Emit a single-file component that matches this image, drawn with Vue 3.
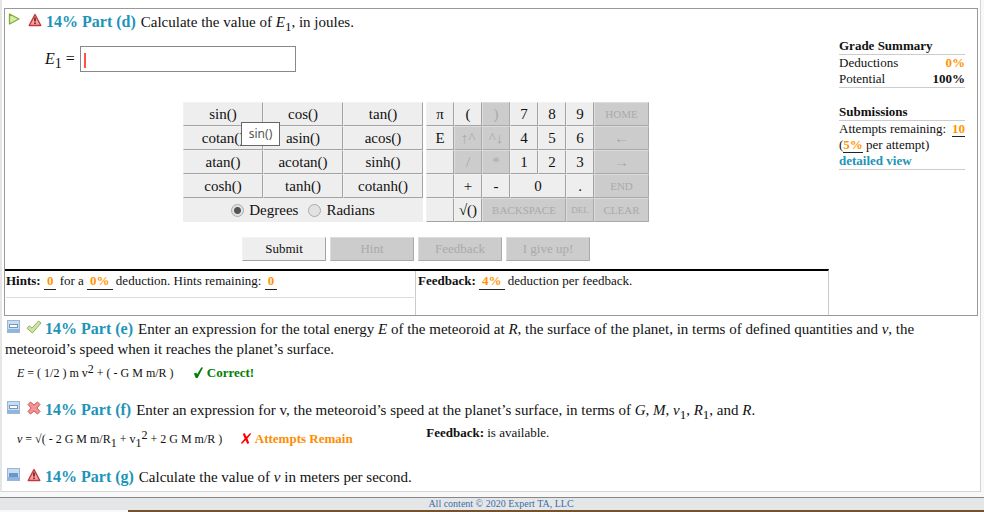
<template>
  <div class="page">
    <main class="assignment">
      <!-- Active part -->
      <section class="active-part">
        <div class="work">
          <h2 class="part-title">
            <svg class="icon icon-arrow" viewBox="0 0 12 12">
              <path d="M1.5 1 L11 6 L1.5 11 Z" fill="#d4efa0" stroke="#84aa3c" stroke-width="1.3" stroke-linejoin="round" />
            </svg>
            <svg class="icon" viewBox="0 0 14 14">
              <path d="M7 1.5 L12.8 12.5 H1.2 Z" fill="#f6a0a0" stroke="#bd3b3f" stroke-width="1.4" stroke-linejoin="round" />
              <path d="M7 4.5 V8.5 M7 9.6 V11" stroke="#7c1218" stroke-width="1.6" />
            </svg>
            <a href="#" class="part-link">14% Part (d)</a>
            <span>Calculate the value of <i>E</i><sub>1</sub>, in joules.</span>
          </h2>

          <div class="answer-row">
            <label for="answer"><i>E</i><sub>1</sub> =</label>
            <div class="answer-box">
              <input id="answer" v-model="answer" type="text" autocomplete="off" />
              <span class="caret"></span>
            </div>
          </div>

          <div class="calculator">
            <div class="functions">
              <button v-for="fn in functions" :key="fn" type="button" class="key" @click="insert(fn)">{{ fn }}</button>
              <div class="angle-mode">
                <label><input v-model="angle" type="radio" name="angle" value="deg" />Degrees</label>
                <label><input v-model="angle" type="radio" name="angle" value="rad" />Radians</label>
              </div>
              <div class="tooltip" role="tooltip">sin()</div>
            </div>
            <div class="keypad">
              <button
                v-for="(key, index) in keys"
                :key="index"
                type="button"
                class="key"
                :class="key.type"
                :disabled="key.off"
                @click="insert(key.label)"
              >{{ key.label }}</button>
            </div>
          </div>

          <div class="actions">
            <button type="button" class="key action">Submit</button>
            <button type="button" class="key action" disabled>Hint</button>
            <button type="button" class="key action" disabled>Feedback</button>
            <button type="button" class="key action" disabled>I give up!</button>
          </div>

          <div class="help">
            <div class="hints">
              <p>
                <b>Hints:</b> <span class="blank">0</span> for a <span class="blank">0%</span>
                deduction. Hints remaining: <span class="blank">0</span>
              </p>
            </div>
            <div class="feedback">
              <p><b>Feedback:</b> <span class="blank">4%</span> deduction per feedback.</p>
            </div>
          </div>
        </div>

        <aside class="summary">
          <div class="summary-block">
            <h3>Grade Summary</h3>
            <div class="summary-line"><span>Deductions</span><b class="orange">0%</b></div>
            <div class="summary-line"><span>Potential</span><b>100%</b></div>
          </div>
          <div class="summary-block">
            <h3>Submissions</h3>
            <div class="summary-line"><span>Attempts remaining:</span><b class="underlined">10</b></div>
            <div>(<b class="underlined">5%</b> per attempt)</div>
            <a href="#">detailed view</a>
          </div>
        </aside>
      </section>

      <!-- Other parts -->
      <section class="part part-e">
        <h2 class="part-title">
          <svg class="icon icon-toggle" viewBox="0 0 13 13">
            <rect x="0.5" y="0.5" width="12" height="12" fill="#c9ddf2" stroke="#9db5d0" />
            <path d="M1 9 H12 V12 H1 Z" fill="#8fb5dc" />
            <rect x="2.5" y="4.5" width="8" height="3" fill="#fff" stroke="#7397c3" />
          </svg>
          <svg class="icon icon-check" viewBox="0 0 16 14">
            <path d="M1 8.2 L3.4 5.8 L6 8.2 L12.6 1 L15 3 L6.4 13 Z" fill="#cfe6a0" stroke="#93ad60" stroke-linejoin="round" />
          </svg>
          <a href="#" class="part-link">14% Part (e)</a>
          <span>Enter an expression for the total energy <i>E</i> of the meteoroid at <i>R</i>, the surface of the planet, in terms of defined quantities and <i>v</i>, the <span>meteoroid’s speed when it reaches the planet’s surface.</span></span>
        </h2>
        <div class="result">
          <span><i>E</i> = ( 1/2 ) m v<sup>2</sup> + ( - G M m/R )</span>
          <b class="verdict correct">
            <svg viewBox="0 0 12 12"><path d="M1 7 L3.5 6 L4.5 8 L9 0.5 H11 L5 12 H3 Z" fill="#008000" /></svg>
            Correct!
          </b>
        </div>
      </section>

      <section class="part part-f">
        <h2 class="part-title">
          <svg class="icon icon-toggle" viewBox="0 0 13 13">
            <rect x="0.5" y="0.5" width="12" height="12" fill="#c9ddf2" stroke="#9db5d0" />
            <path d="M1 9 H12 V12 H1 Z" fill="#8fb5dc" />
            <rect x="2.5" y="4.5" width="8" height="3" fill="#fff" stroke="#7397c3" />
          </svg>
          <svg class="icon" viewBox="0 0 14 14">
            <path d="M3.5 1 L7 4 L10.5 1 L13 3.5 L10 7 L13 10.5 L10.5 13 L7 10 L3.5 13 L1 10.5 L4 7 L1 3.5 Z" fill="#f39494" stroke="#d05555" stroke-linejoin="round" />
          </svg>
          <a href="#" class="part-link">14% Part (f)</a>
          <span>Enter an expression for v, the meteoroid’s speed at the planet’s surface, in terms of <i>G</i>, <i>M</i>, <i>v</i><sub>1</sub>, <i>R</i><sub>1</sub>, and <i>R</i>.</span>
        </h2>
        <div class="result-row">
          <div class="result">
            <span><i>v</i> = √( - 2 G M m/R<sub>1</sub> + v<sub>1</sub><sup>2</sup> + 2 G M m/R )</span>
            <b class="verdict remain">
              <svg viewBox="0 0 12 12"><path d="M2 1 L4 0 L6 4 L10 0 L11 1 L7 6 L9 11 L7 12 L5 8 L1 12 L0 11 L4 6 Z" fill="#f00" /></svg>
              Attempts Remain
            </b>
          </div>
          <div><b>Feedback:</b> is available.</div>
        </div>
      </section>

      <section class="part part-g">
        <h2 class="part-title">
          <svg class="icon icon-toggle" viewBox="0 0 13 13">
            <rect x="0.5" y="0.5" width="12" height="12" fill="#c9ddf2" stroke="#9db5d0" />
            <path d="M1 9 H12 V12 H1 Z" fill="#8fb5dc" />
            <rect x="2" y="5" width="9" height="4" fill="#6a97c8" />
          </svg>
          <svg class="icon" viewBox="0 0 14 14">
            <path d="M7 1.5 L12.8 12.5 H1.2 Z" fill="#f6a0a0" stroke="#bd3b3f" stroke-width="1.4" stroke-linejoin="round" />
            <path d="M7 4.5 V8.5 M7 9.6 V11" stroke="#7c1218" stroke-width="1.6" />
          </svg>
          <a href="#" class="part-link">14% Part (g)</a>
          <span>Calculate the value of <i>v</i> in meters per second.</span>
        </h2>
      </section>
    </main>
    <footer>All content © 2020 Expert TA, LLC</footer>
    <div class="progress"></div>
  </div>
</template>

<script setup>
import { ref } from "vue";

const answer = ref("");
const angle = ref("deg");

const functions = [
  "sin()", "cos()", "tan()",
  "cotan()", "asin()", "acos()",
  "atan()", "acotan()", "sinh()",
  "cosh()", "tanh()", "cotanh()"
];

const keys = [
  { label: "π" }, { label: "(" }, { label: ")", off: true },
  { label: "7" }, { label: "8" }, { label: "9" },
  { label: "HOME", off: true, type: "command" },

  { label: "E" }, { label: "↑^", off: true }, { label: "^↓", off: true },
  { label: "4" }, { label: "5" }, { label: "6" },
  { label: "←", off: true },

  { label: "" }, { label: "/", off: true }, { label: "*", off: true },
  { label: "1" }, { label: "2" }, { label: "3" },
  { label: "→", off: true },

  { label: "" }, { label: "+" }, { label: "-" },
  { label: "0", type: "wide" }, { label: "." },
  { label: "END", off: true, type: "command" },

  { label: "" }, { label: "√()" },
  { label: "BACKSPACE", off: true, type: "backspace" },
  { label: "DEL", off: true, type: "small" },
  { label: "CLEAR", off: true, type: "command" }
];

const insert = (text) => {
  answer.value += text;
};
</script>

<style>
body {
  margin: 0;
  background: #f8f8f8;
}
</style>

<style scoped>
.page {
  font-family: "Liberation Serif", "Times New Roman", serif;
  font-size: 13px;
  line-height: 16px;
  color: #111;
}

.page * {
  box-sizing: border-box;
}

.assignment {
  margin-right: 3px;
  border-left: 2px solid #e6e6e6;
  border-right: 1px solid #d4d4d4;
  border-bottom: 1px solid #d4d4d4;
  padding: 8px 2px 4px 2px;
  background: #fff;
}

h2,
h3,
p {
  margin: 0;
}

sub,
sup {
  font-size: 13px;
  line-height: 0;
}

sub {
  vertical-align: -4px;
}

sup {
  vertical-align: 4px;
}

a {
  color: #1d94b8;
  font-weight: bold;
  text-decoration: none;
}

.active-part {
  display: flex;
  justify-content: space-between;
  border: 1px solid #999;
}

.work {
  flex: 1;
  max-width: 824px;
}

.part-title {
  font-size: 15px;
  font-weight: normal;
  line-height: 20px;
}

.work .part-title {
  padding: 3px 0 0 3px;
}

.icon {
  width: 14px;
  height: 14px;
  margin-right: 4px;
  vertical-align: 0;
}

.icon-check {
  width: 16px;
  margin-left: -1px;
  margin-right: 3px;
}

.icon-arrow {
  width: 12px;
  height: 12px;
  margin-right: 8px;
  vertical-align: 2px;
}

.icon-toggle {
  width: 13px;
  height: 13px;
  margin-left: 2px;
  margin-right: 7px;
  vertical-align: 1px;
}

.part-link {
  font-size: 16px;
  margin-right: 5px;
}

.answer-row {
  display: flex;
  align-items: center;
  gap: 5px;
  padding: 14px 0 0 40px;
  font-size: 16px;
}

.answer-row sub {
  font-size: 14px;
}

.answer-box {
  position: relative;
}

.answer-box input {
  display: block;
  width: 216px;
  height: 26px;
  border: 1px solid #888;
  padding: 2px 6px;
  font: inherit;
  outline: none;
}

.caret {
  position: absolute;
  left: 4px;
  top: 7px;
  width: 2px;
  height: 15px;
  background: #ff5050;
}

.calculator {
  display: flex;
  gap: 3px;
  padding: 30px 0 0 178px;
}

.functions {
  position: relative;
  display: grid;
  grid-template-columns: repeat(3, 80px);
  grid-auto-rows: 24px;
  background: #eee;
}

.keypad {
  display: grid;
  grid-template-columns: repeat(6, 28px) 55px;
  grid-auto-rows: 24px;
}

.key {
  min-width: 0;
  padding: 0;
  border: 1px solid;
  border-color: #f2f2f2 #a3a3a3 #a3a3a3 #f2f2f2;
  background: #eee;
  color: #111;
  font-family: inherit;
  font-size: 15px;
  line-height: 20px;
  white-space: nowrap;
}

.key:disabled {
  background: #ccc;
  border-color: #dcdcdc #aaa #aaa #dcdcdc;
  color: #aaa;
}

.command,
.backspace {
  font-size: 11px;
}

.small {
  font-size: 9px;
}

.wide {
  grid-column: span 2;
}

.backspace {
  grid-column: span 3;
}

.angle-mode {
  grid-column: span 3;
  display: flex;
  justify-content: center;
  gap: 10px;
  font-size: 15px;
  line-height: 22px;
}

.angle-mode label {
  display: flex;
  align-items: center;
  gap: 5px;
}

.angle-mode input {
  appearance: none;
  width: 13px;
  height: 13px;
  margin: 0;
  border: 1px solid #aaa;
  border-radius: 50%;
  background: #e2e2e2;
}

.angle-mode input:checked {
  background: radial-gradient(circle, #555 0 3px, #e2e2e2 4px);
}

.tooltip {
  position: absolute;
  left: 58px;
  top: 20px;
  width: 39px;
  height: 24px;
  border: 1px solid #666;
  background: #fff;
  color: #555;
  font-family: "Noto Sans", sans-serif;
  font-size: 12px;
  line-height: 22px;
  text-align: center;
}

.actions {
  display: flex;
  gap: 4px;
  padding: 15px 0 8px 237px;
}

.action {
  width: 84px;
  height: 24px;
  font-size: 13px;
}

.help {
  display: grid;
  grid-template-columns: 410px 1fr;
  border-top: 2px solid #000;
  border-right: 1px solid #ccc;
}

.hints {
  padding: 2px 1px 17px;
}

.hints p {
  padding-bottom: 7px;
  border-bottom: 1px solid #ddd;
}

.feedback {
  padding: 2px;
  border-left: 1px solid #ccc;
}

.blank {
  display: inline-block;
  padding: 0 3px;
  border-bottom: 1px solid #222;
  color: #ff9500;
  font-weight: bold;
}

.summary {
  width: 126px;
  margin-right: 12px;
  padding-top: 29px;
}

.summary-block {
  margin-bottom: 16px;
  border-bottom: 1px solid #ccc;
}

.summary h3 {
  border-bottom: 1px solid #ccc;
  font-size: 13px;
  line-height: 16px;
}

.summary-line {
  display: flex;
  justify-content: space-between;
}

.orange,
.underlined {
  color: #ff9500;
}

.underlined {
  border-bottom: 1px solid #222;
  line-height: 15px;
}

.part {
  padding: 0 1px;
}

.part-e {
  padding-top: 3px;
}

.part-f {
  padding-top: 19px;
}

.part-g {
  padding-top: 20px;
}

.result {
  display: flex;
  gap: 19px;
  padding: 6px 0 0 12px;
  font-size: 12px;
}

.result sub,
.result sup {
  font-size: 12px;
}

.verdict {
  font-size: 13px;
}

.verdict svg {
  width: 11px;
  height: 11px;
  vertical-align: -1px;
}

.correct {
  color: #008000;
}

.remain {
  color: #ff8c00;
}

.result-row {
  display: grid;
  grid-template-columns: 13fr 17fr;
  padding-top: 5px;
}

footer {
  margin-top: 5px;
  border-top: 1px solid #888;
  padding-left: 18px;
  background: #e5e6e8;
  color: #3a6ea5;
  font-size: 10px;
  line-height: 12px;
  text-align: center;
}

.progress {
  height: 2px;
  margin-left: 13%;
  background: #75522d;
}
</style>
